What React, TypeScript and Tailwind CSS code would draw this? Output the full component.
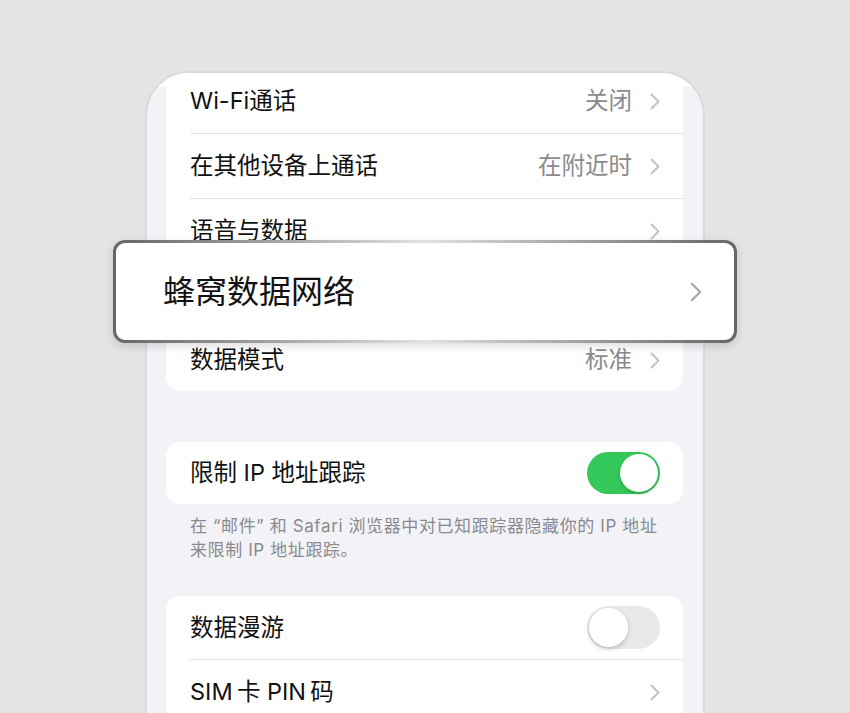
import React from "react";

const font = "font-['Inter','Noto_Sans_CJK_SC',sans-serif]";

const Chevron = ({ className = "" }: { className?: string }) => (
  <svg viewBox="0 0 10 17" className={className} fill="none">
    <path d="M1.5 1.5 L8.5 8.5 L1.5 15.5" stroke="currentColor" strokeWidth="2" strokeLinecap="round" strokeLinejoin="round" />
  </svg>
);

const Toggle = ({ on }: { on: boolean }) =>
  on ? (
    <div className="flex h-[42px] w-[73px] items-center justify-end rounded-full bg-[#34c759] p-[2px]">
      <div className="size-[38px] rounded-full bg-white shadow-[0_2px_4px_rgba(0,0,0,0.18)]" />
    </div>
  ) : (
    <div className="flex h-[43px] w-[73px] items-center justify-start rounded-full bg-[#e9e9eb] p-[2px]">
      <div className="size-[39px] rounded-full bg-white shadow-[0_2px_5px_rgba(0,0,0,0.2)]" />
    </div>
  );

type RowProps = {
  label: string;
  value?: string;
  chevron?: boolean;
  toggle?: boolean;
  toggleOn?: boolean;
  divider?: boolean;
  height?: string;
};

const Row = ({ label, value, chevron = true, toggle, toggleOn, divider = true, height = "h-[65px]" }: RowProps) => (
  <div className={`flex ${height} items-center pl-[24px]`}>
    <div className={`flex h-full flex-1 items-center pr-[23px] ${divider ? "border-b border-[#e2e2e4]" : ""}`}>
      <span className="flex-1 text-[23.5px] text-[#111]">{label}</span>
      {value && <span className="text-[23.5px] text-[#8a8a8e]">{value}</span>}
      {toggle ? (
        <Toggle on={!!toggleOn} />
      ) : (
        chevron && <Chevron className="ml-[18px] h-[17px] w-[10px] text-[#c4c4c7]" />
      )}
    </div>
  </div>
);

export default function App() {
  return (
    <div className={`relative h-[713px] w-[850px] overflow-hidden bg-[#e4e4e4] ${font}`}>
      <div className="ml-[145px] mt-[71px] h-[700px] w-[560px] overflow-hidden rounded-t-[44px] border-[2px] border-b-0 border-[#dadada] bg-[#f2f2f7]">
        <div className="h-[14px] bg-white" />
        <div className="-mt-[18px] pl-[19px] pr-[20px]">
          <div className="overflow-hidden rounded-b-[14px] bg-white">
            <Row label="Wi-Fi通话" value="关闭" />
            <Row label="在其他设备上通话" value="在附近时" />
            <Row label="语音与数据" />
            <Row label="蜂窝数据网络" />
            <Row label="数据模式" value="标准" divider={false} height="h-[62px]" />
          </div>

          <div className="mt-[51px] overflow-hidden rounded-[14px] bg-white">
            <Row label="限制 IP 地址跟踪" toggle toggleOn divider={false} height="h-[62px]" />
          </div>
          <p className="mt-[10px] whitespace-nowrap px-[24px] text-[17px] leading-[24px] tracking-[0.6px] text-[#8a8a8e]">
            在 “邮件” 和 Safari 浏览器中对已知跟踪器隐藏你的 IP 地址
            <br />
            来限制 IP 地址跟踪。
          </p>

          <div className="mt-[34px] overflow-hidden rounded-[14px] bg-white">
            <Row label="数据漫游" toggle height="h-[64px]" />
            <Row label={"SIM\u2009卡 PIN\u2009码"} />
          </div>
        </div>
      </div>

      {/* magnified row */}
      <div className="absolute left-[113px] top-[240px] h-[103px] w-[624px] rounded-[12px] bg-linear-to-r from-[#666] via-[#e2e2e2] to-[#666] p-[3px] shadow-[0_3px_10px_rgba(0,0,0,0.14)]">
        <div className="flex h-full items-center rounded-[9px] bg-white pl-[47px] pr-[32px]">
          <span className="flex-1 text-[32px] text-[#111]">蜂窝数据网络</span>
          <Chevron className="h-[20px] w-[12px] text-[#a9a9ab]" />
        </div>
      </div>
    </div>
  );
}
